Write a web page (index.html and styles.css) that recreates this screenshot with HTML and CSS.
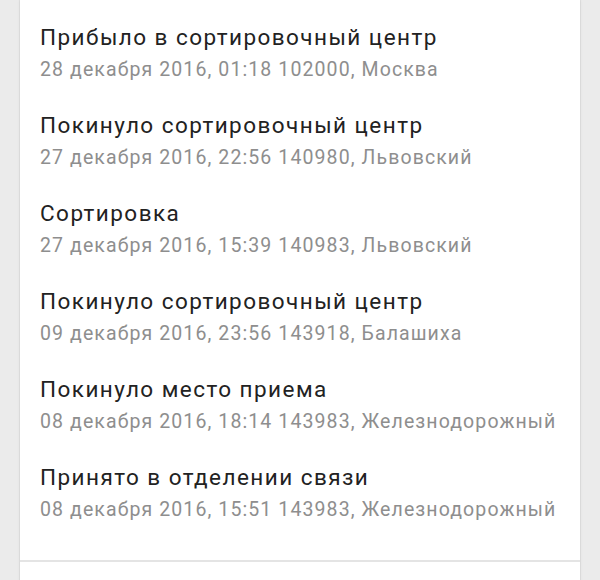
FILE: index.html
```html
<!DOCTYPE html>
<html lang="ru">
<head>
<meta charset="utf-8">
<link rel="stylesheet" href="styles.css">
</head>
<body>
<div class="page">
  <div class="card">
    <ul class="events">
      <li class="event">
        <div class="title">Прибыло в сортировочный центр</div>
        <div class="meta">28 декабря 2016, 01:18 102000, Москва</div>
      </li>
      <li class="event">
        <div class="title">Покинуло сортировочный центр</div>
        <div class="meta">27 декабря 2016, 22:56 140980, Львовский</div>
      </li>
      <li class="event">
        <div class="title">Сортировка</div>
        <div class="meta">27 декабря 2016, 15:39 140983, Львовский</div>
      </li>
      <li class="event">
        <div class="title">Покинуло сортировочный центр</div>
        <div class="meta">09 декабря 2016, 23:56 143918, Балашиха</div>
      </li>
      <li class="event">
        <div class="title">Покинуло место приема</div>
        <div class="meta">08 декабря 2016, 18:14 143983, Железнодорожный</div>
      </li>
      <li class="event">
        <div class="title">Принято в отделении связи</div>
        <div class="meta">08 декабря 2016, 15:51 143983, Железнодорожный</div>
      </li>
    </ul>
    <div class="footer"></div>
  </div>
</div>
</body>
</html>
```
FILE: styles.css
```css
html, body {
  margin: 0;
  padding: 0;
  background: #ebebeb;
  font-family: Roboto, "Noto Sans", sans-serif;
}
.page {
  padding: 0 20px;
  height: 580px;
  overflow: hidden;
}
.card {
  background: #ffffff;
  box-shadow: 0 0 1px rgba(0,0,0,0.25), 0 0 3px rgba(0,0,0,0.08);
  min-height: 600px;
}
.events {
  list-style: none;
  margin: 0;
  padding: 8px 0 24px;
  border-bottom: 2px solid #e4e4e4;
}
.event {
  padding: 15px 20px 14px;
  white-space: nowrap;
}
.title {
  font-size: 22.5px;
  line-height: 28px;
  letter-spacing: 1.45px;
  color: #222222;
}
.meta {
  margin-top: 7px;
  font-size: 19.5px;
  line-height: 24px;
  letter-spacing: 1.1px;
  color: #8e8e8e;
}
.footer {
  height: 40px;
}
```
